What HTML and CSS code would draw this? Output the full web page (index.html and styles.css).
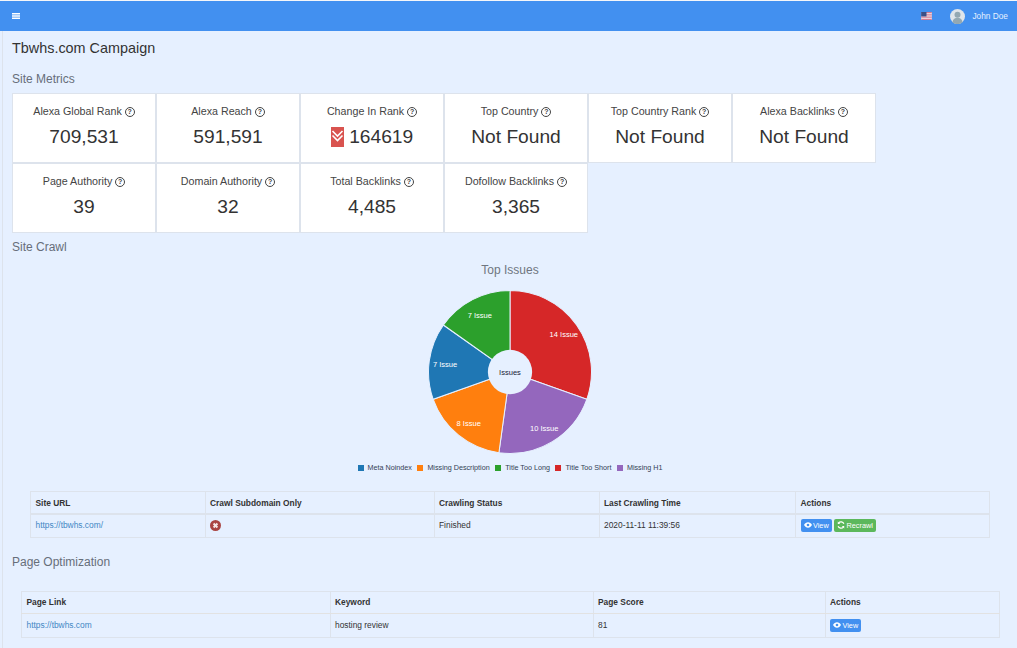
FILE: index.html
```html
<!DOCTYPE html>
<html>
<head>
    <title>Tbwhs.com Campaign</title>
    <link rel="stylesheet" href="styles.css">
</head>
<body>
    <header class="topbar">
        <svg class="burger" viewBox="0 0 8 6">
            <rect y="0" width="8" height="1.500" fill="#fff"/>
            <rect y="2.250" width="8" height="1.500" fill="#fff"/>
            <rect y="4.500" width="8" height="1.500" fill="#fff"/>
        </svg>
        <svg class="flag" viewBox="0 0 12 9">
            <rect width="12" height="9" fill="#f4f0f2"/>
            <rect y="0" width="12" height="1" fill="#d06f88"/>
            <rect y="2" width="12" height="1" fill="#d06f88"/>
            <rect y="4" width="12" height="1" fill="#d06f88"/>
            <rect y="6" width="12" height="1" fill="#d06f88"/>
            <rect y="8" width="12" height="1" fill="#d06f88"/>
            <rect width="6" height="5" fill="#3b5087"/>
        </svg>
        <svg class="avatar" viewBox="0 0 16 16">
            <circle cx="8" cy="8" r="8" fill="#dfe5ea"/>
            <circle cx="8" cy="6" r="3.2" fill="#93a8b2"/>
            <path d="M2.6 14c.6-3.4 2.8-4.6 5.4-4.6s4.800 1.200 5.400 4.600A8 8 0 0 1 2.600 14z" fill="#93a8b2"/>
        </svg>
        <span class="username">John Doe</span>
    </header>

    <main class="content">
        <h1>Tbwhs.com Campaign</h1>

        <h2 class="metrics-title">Site Metrics</h2>
        <div class="metrics">
            <div class="metric"><div class="metric-label">Alexa Global Rank <i class="help">?</i></div><div class="metric-value">709,531</div></div>
            <div class="metric"><div class="metric-label">Alexa Reach <i class="help">?</i></div><div class="metric-value">591,591</div></div>
            <div class="metric">
                <div class="metric-label">Change In Rank <i class="help">?</i></div>
                <div class="metric-value">
                    <svg class="down" viewBox="0 0 13 20">
                        <rect width="13" height="20" fill="#d9534f"/>
                        <path d="M1.500 4l5 5 5-5M1.500 8.500l5 5 5-5" fill="none" stroke="#fff" stroke-width="1.600"/>
                    </svg>
                    164619
                </div>
            </div>
            <div class="metric"><div class="metric-label">Top Country <i class="help">?</i></div><div class="metric-value">Not Found</div></div>
            <div class="metric"><div class="metric-label">Top Country Rank <i class="help">?</i></div><div class="metric-value">Not Found</div></div>
            <div class="metric"><div class="metric-label">Alexa Backlinks <i class="help">?</i></div><div class="metric-value">Not Found</div></div>
            <div class="metric"><div class="metric-label">Page Authority <i class="help">?</i></div><div class="metric-value">39</div></div>
            <div class="metric"><div class="metric-label">Domain Authority <i class="help">?</i></div><div class="metric-value">32</div></div>
            <div class="metric"><div class="metric-label">Total Backlinks <i class="help">?</i></div><div class="metric-value">4,485</div></div>
            <div class="metric"><div class="metric-label">Dofollow Backlinks <i class="help">?</i></div><div class="metric-value">3,365</div></div>
        </div>

        <h2 class="crawl-title">Site Crawl</h2>
        <div class="chart">
            <div class="chart-title">Top Issues</div>
            <svg class="pie" viewBox="0.500 0.500 165 165">
                <g stroke="#e6f0ff" stroke-width="1">
                    <path d="M83 83V2A81 81 0 0 1 159.330 110.130Z" fill="#d62728"/>
                    <path d="M83 83L159.330 110.130A81 81 0 0 1 71.970 163.250Z" fill="#9467bd"/>
                    <path d="M83 83L71.970 163.250A81 81 0 0 1 6.670 110.130Z" fill="#ff7f0e"/>
                    <path d="M83 83L6.670 110.130A81 81 0 0 1 16.820 36.290Z" fill="#1f77b4"/>
                    <path d="M83 83L16.820 36.290A81 81 0 0 1 83 2Z" fill="#2ca02c"/>
                </g>
                <circle cx="83" cy="83" r="22" fill="#e6f0ff"/>
                <g class="pie-label">
                    <text x="136.500" y="48.500">14 Issue</text>
                    <text x="117" y="142">10 Issue</text>
                    <text x="42" y="137">8 Issue</text>
                    <text x="18.500" y="78">7 Issue</text>
                    <text x="53" y="29">7 Issue</text>
                </g>
                <text class="pie-center" x="83" y="86">Issues</text>
            </svg>
            <div class="legend">
                <span class="legend-item"><i class="swatch blue"></i>Meta Noindex</span>
                <span class="legend-item"><i class="swatch orange"></i>Missing Description</span>
                <span class="legend-item"><i class="swatch green"></i>Title Too Long</span>
                <span class="legend-item"><i class="swatch red"></i>Title Too Short</span>
                <span class="legend-item"><i class="swatch purple"></i>Missing H1</span>
            </div>
        </div>

        <div class="table-wrap crawl-wrap">
            <table class="crawl-table">
                <colgroup>
                    <col class="c1"><col class="c2"><col class="c3"><col class="c4"><col class="c5">
                </colgroup>
                <tr>
                    <th>Site URL</th>
                    <th>Crawl Subdomain Only</th>
                    <th>Crawling Status</th>
                    <th>Last Crawling Time</th>
                    <th>Actions</th>
                </tr>
                <tr>
                    <td><a href="#">https://tbwhs.com/</a></td>
                    <td>
                        <svg class="cross" viewBox="0 0 12 12">
                            <circle cx="6" cy="6" r="6" fill="#a94442"/>
                            <path d="M3.900 3.900l4.200 4.200M8.100 3.900l-4.200 4.200" stroke="#f4e6e6" stroke-width="2.200"/>
                        </svg>
                    </td>
                    <td>Finished</td>
                    <td>2020-11-11 11:39:56</td>
                    <td>
                        <a class="btn btn-view" href="#"><svg class="btn-icon" viewBox="0 0 12 8"><path d="M0 4c1.500-2.500 3.500-4 6-4s4.500 1.500 6 4c-1.500 2.500-3.500 4-6 4S1.500 6.500 0 4z" fill="#fff"/><circle cx="6" cy="4" r="2" fill="#4290f0"/></svg>View</a>
                        <a class="btn btn-recrawl" href="#"><svg class="btn-icon btn-icon-sq" viewBox="0 0 10 10"><path d="M8.600 3.400A3.900 3.900 0 0 0 2 2.400M1.400 6.600A3.900 3.900 0 0 0 8 7.600" fill="none" stroke="#fff" stroke-width="1.500"/><path d="M1 .6v3h3zM9 9.400v-3H6z" fill="#fff"/></svg>Recrawl</a>
                    </td>
                </tr>
            </table>
        </div>

        <h2 class="optimize-title">Page Optimization</h2>
        <div class="table-wrap page-wrap">
            <table class="page-table">
                <colgroup>
                    <col class="p1"><col class="p2"><col class="p3"><col class="p4">
                </colgroup>
                <tr>
                    <th>Page Link</th>
                    <th>Keyword</th>
                    <th>Page Score</th>
                    <th>Actions</th>
                </tr>
                <tr>
                    <td><a href="#">https://tbwhs.com</a></td>
                    <td>hosting review</td>
                    <td>81</td>
                    <td><a class="btn btn-view" href="#"><svg class="btn-icon" viewBox="0 0 12 8"><path d="M0 4c1.500-2.500 3.500-4 6-4s4.500 1.500 6 4c-1.500 2.500-3.500 4-6 4S1.500 6.500 0 4z" fill="#fff"/><circle cx="6" cy="4" r="2" fill="#4290f0"/></svg>View</a></td>
                </tr>
            </table>
        </div>
    </main>
</body>
</html>
```

FILE: styles.css
```css
html{
    height: 100%;
    overflow: hidden;
}
body{
    margin: 0;
    height: 648px;
    overflow: hidden;
    background-color: #e6f0ff;
    font-family: "Liberation Sans", Arial, sans-serif;
    color: #333;
    border-top: 1px solid #f4f6f9;
    box-sizing: border-box;
}
.topbar{
    height: 30px;
    background-color: #4290f0;
    display: flex;
    align-items: center;
    padding: 0 9px 0 12px;
    color: #fff;
}
.burger{
    width: 8px;
    height: 6px;
    margin-right: auto;
}
.flag{
    width: 11px;
    height: 8px;
    margin-right: 18px;
}
.avatar{
    width: 15px;
    height: 15px;
    margin-right: 7px;
}
.username{
    font-size: 8.300px;
    color: #e6f0ff;
}
.content{
    margin-left: 2px;
    border-left: 1px solid #dde3ec;
    padding: 0 0 0 9px;
    height: 617px;
}
h1{
    font-size: 14.400px;
    font-weight: 400;
    margin: 0;
    padding-top: 9px;
    line-height: 17px;
    color: #333;
}
h2{
    font-size: 12px;
    font-weight: 400;
    line-height: 14px;
    margin: 0;
    color: #666e7a;
}
.metrics-title{
    padding-top: 15px;
    padding-bottom: 7px;
}
.metrics{
    display: grid;
    grid-template-columns: repeat(6, 144px);
    grid-auto-rows: 70px;
}
.metric{
    background-color: #fff;
    border: 1px solid #dde3ec;
    box-sizing: border-box;
    text-align: center;
    padding-top: 11px;
}
.metric-label{
    font-size: 10.700px;
    line-height: 13px;
    color: #444;
}
.help{
    display: inline-block;
    width: 8px;
    height: 8px;
    line-height: 8px;
    border: 1px solid #444;
    border-radius: 50%;
    font-size: 7px;
    font-style: normal;
    font-weight: 700;
    text-align: center;
    vertical-align: 1px;
}
.metric-value{
    font-size: 19.200px;
    line-height: 22px;
    margin-top: 8px;
    color: #333;
}
.down{
    width: 13px;
    height: 20px;
    vertical-align: -4px;
}
.crawl-title{
    padding-top: 7px;
}
.chart{
    width: 996px;
    text-align: center;
}
.chart-title{
    font-size: 12px;
    line-height: 14px;
    margin-top: 9px;
    color: #6f7680;
}
.pie{
    display: block;
    width: 166px;
    height: 166px;
    margin: 12px auto 0;
}
.pie-label text{
    font-size: 7.500px;
    fill: #fff;
    text-anchor: middle;
}
.pie-center{
    font-size: 7.500px;
    fill: #1a2438;
    text-anchor: middle;
}
.legend{
    display: flex;
    justify-content: center;
    gap: 5.500px;
    margin-top: 8px;
    font-size: 7.200px;
    line-height: 9px;
    color: #333f55;
}
.legend-item{
    display: flex;
    align-items: center;
}
.swatch{
    width: 6px;
    height: 6px;
    margin-right: 4px;
}
.blue{ background-color: #1f77b4; }
.orange{ background-color: #ff7f0e; }
.green{ background-color: #2ca02c; }
.red{ background-color: #d62728; }
.purple{ background-color: #9467bd; }
.table-wrap table{
    border-collapse: collapse;
    table-layout: fixed;
    font-size: 8.400px;
    color: #333;
}
.crawl-wrap{
    margin: 19px 0 0 18px;
}
.crawl-table{
    width: 959px;
}
.page-wrap{
    margin: 22px 0 0 9px;
}
.page-table{
    width: 977.500px;
}
th, td{
    border: 1px solid #dde3ec;
    text-align: left;
    padding: 0 4.500px 1px;
}
th{
    height: 21px;
    padding-bottom: 0;
    font-weight: 700;
    border-bottom-width: 2px;
}
td{
    height: 20px;
    padding-bottom: 2px;
}
td a{
    color: #4287c4;
    text-decoration: none;
}
.page-table th{
    height: 20px;
    padding-bottom: 1px;
    border-bottom: 1px solid #e2e2e2;
}
.page-table td{
    height: 22px;
    padding-bottom: 1px;
}
.c1{ width: 174.500px; }
.c2{ width: 229px; }
.c3{ width: 165px; }
.c4{ width: 196.500px; }
.c5{ width: 194px; }
.p1{ width: 308.500px; }
.p2{ width: 263px; }
.p3{ width: 232px; }
.p4{ width: 174px; }
.cross{
    display: block;
    width: 11px;
    height: 11px;
}
.btn{
    display: inline-block;
    height: 13px;
    line-height: 13px;
    padding: 0 3px;
    border-radius: 2px;
    font-size: 7.300px;
    color: #fff;
    vertical-align: middle;
}
.btn-view{
    background-color: #4290f0;
}
.btn-recrawl{
    background-color: #5cb85c;
}
.btn-icon{
    width: 8px;
    height: 6px;
    margin-right: 1.500px;
    vertical-align: -0.500px;
}
.btn-icon-sq{
    height: 8px;
    vertical-align: -1.500px;
}
.optimize-title{
    padding-top: 17px;
}
```
